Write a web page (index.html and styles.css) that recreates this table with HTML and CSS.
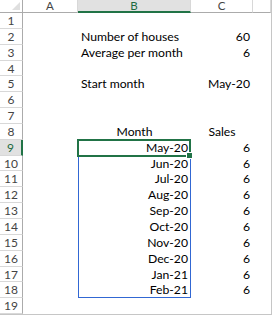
FILE: index.html
```html
<!DOCTYPE html>
<html>
<head>
<meta charset="utf-8">
<link rel="stylesheet" href="styles.css">
</head>
<body>
<div class="sheet">
  <div class="corner"><span class="tri"></span></div>
  <div class="ch">A</div>
  <div class="ch sel">B</div>
  <div class="ch">C</div>
  <div class="ch"></div>

  <div class="rh">1</div><div class="c"></div><div class="c"></div><div class="c"></div><div class="c"></div>
  <div class="rh">2</div><div class="c"></div><div class="c l">Number of houses</div><div class="c r">60</div><div class="c"></div>
  <div class="rh">3</div><div class="c"></div><div class="c l">Average per month</div><div class="c r">6</div><div class="c"></div>
  <div class="rh">4</div><div class="c"></div><div class="c"></div><div class="c"></div><div class="c"></div>
  <div class="rh">5</div><div class="c"></div><div class="c l">Start month</div><div class="c r">May-20</div><div class="c"></div>
  <div class="rh">6</div><div class="c"></div><div class="c"></div><div class="c"></div><div class="c"></div>
  <div class="rh">7</div><div class="c"></div><div class="c"></div><div class="c"></div><div class="c"></div>
  <div class="rh">8</div><div class="c"></div><div class="c m">Month</div><div class="c m">Sales</div><div class="c"></div>
  <div class="rh rsel">9</div><div class="c"></div><div class="c r anchor">May-20<span class="range"></span><span class="active"><span class="handle"></span></span></div><div class="c r">6</div><div class="c"></div>
  <div class="rh">10</div><div class="c"></div><div class="c r">Jun-20</div><div class="c r">6</div><div class="c"></div>
  <div class="rh">11</div><div class="c"></div><div class="c r">Jul-20</div><div class="c r">6</div><div class="c"></div>
  <div class="rh">12</div><div class="c"></div><div class="c r">Aug-20</div><div class="c r">6</div><div class="c"></div>
  <div class="rh">13</div><div class="c"></div><div class="c r">Sep-20</div><div class="c r">6</div><div class="c"></div>
  <div class="rh">14</div><div class="c"></div><div class="c r">Oct-20</div><div class="c r">6</div><div class="c"></div>
  <div class="rh">15</div><div class="c"></div><div class="c r">Nov-20</div><div class="c r">6</div><div class="c"></div>
  <div class="rh">16</div><div class="c"></div><div class="c r">Dec-20</div><div class="c r">6</div><div class="c"></div>
  <div class="rh">17</div><div class="c"></div><div class="c r">Jan-21</div><div class="c r">6</div><div class="c"></div>
  <div class="rh">18</div><div class="c"></div><div class="c r">Feb-21</div><div class="c r">6</div><div class="c"></div>
  <div class="rh">19</div><div class="c"></div><div class="c"></div><div class="c"></div><div class="c"></div>
</div>
</body>
</html>
```

FILE: styles.css
```css
html, body {
  margin: 0;
  padding: 0;
  background: #fff;
}
body {
  width: 275px;
  height: 315px;
  overflow: hidden;
  font-family: Lato, "Liberation Sans", sans-serif;
  font-size: 12.2px;
  color: #000;
}
.sheet {
  display: grid;
  grid-template-columns: 23px 55px 113px 62px 18px;
  grid-template-rows: 13px repeat(19, 15.85px);
  width: 271px;
  border-right: 1px solid #c6c6c6;
  border-bottom: 1px solid #c6c6c6;
}
.sheet > div {
  box-sizing: border-box;
  min-width: 0;
}
.corner {
  position: relative;
  border-right: 1px solid #ababab;
  border-bottom: 1px solid #ababab;
}
.tri {
  position: absolute;
  right: 2px;
  bottom: 2px;
  width: 0;
  height: 0;
  border-left: 8px solid transparent;
  border-bottom: 8px solid #dfdfdf;
}
.ch {
  border-right: 1px solid #d8d8d8;
  border-bottom: 1px solid #ababab;
  text-align: center;
  color: #444;
  font-size: 11.5px;
  line-height: 11px;
}
.ch.sel {
  background: #e1e1e1;
  border-bottom: 2px solid #217346;
  color: #1e6b41;
}
.rh {
  border-right: 1px solid #ababab;
  border-bottom: 1px solid #d8d8d8;
  text-align: center;
  color: #444;
  font-size: 12px;
  line-height: 15px;
}
.rh.rsel {
  background: #e1e1e1;
  border-right: 2px solid #217346;
  color: #1e6b41;
}
.c {
  padding: 0 3px;
  line-height: 15px;
  white-space: nowrap;
}
.l { text-align: left; }
.r { text-align: right; }
.m { text-align: center; }
.anchor {
  position: relative;
}
.range {
  position: absolute;
  left: 0;
  top: 0;
  width: 113px;
  height: 158.5px;
  box-sizing: border-box;
  border: 1px solid #3167d3;
  pointer-events: none;
}
.active {
  position: absolute;
  left: -1px;
  top: -1px;
  width: 114px;
  height: 18px;
  box-sizing: border-box;
  border: 2px solid #217346;
  pointer-events: none;
}
.handle {
  position: absolute;
  right: -4px;
  bottom: -4px;
  width: 5px;
  height: 5px;
  background: #217346;
  border: 1px solid #fff;
}
```
